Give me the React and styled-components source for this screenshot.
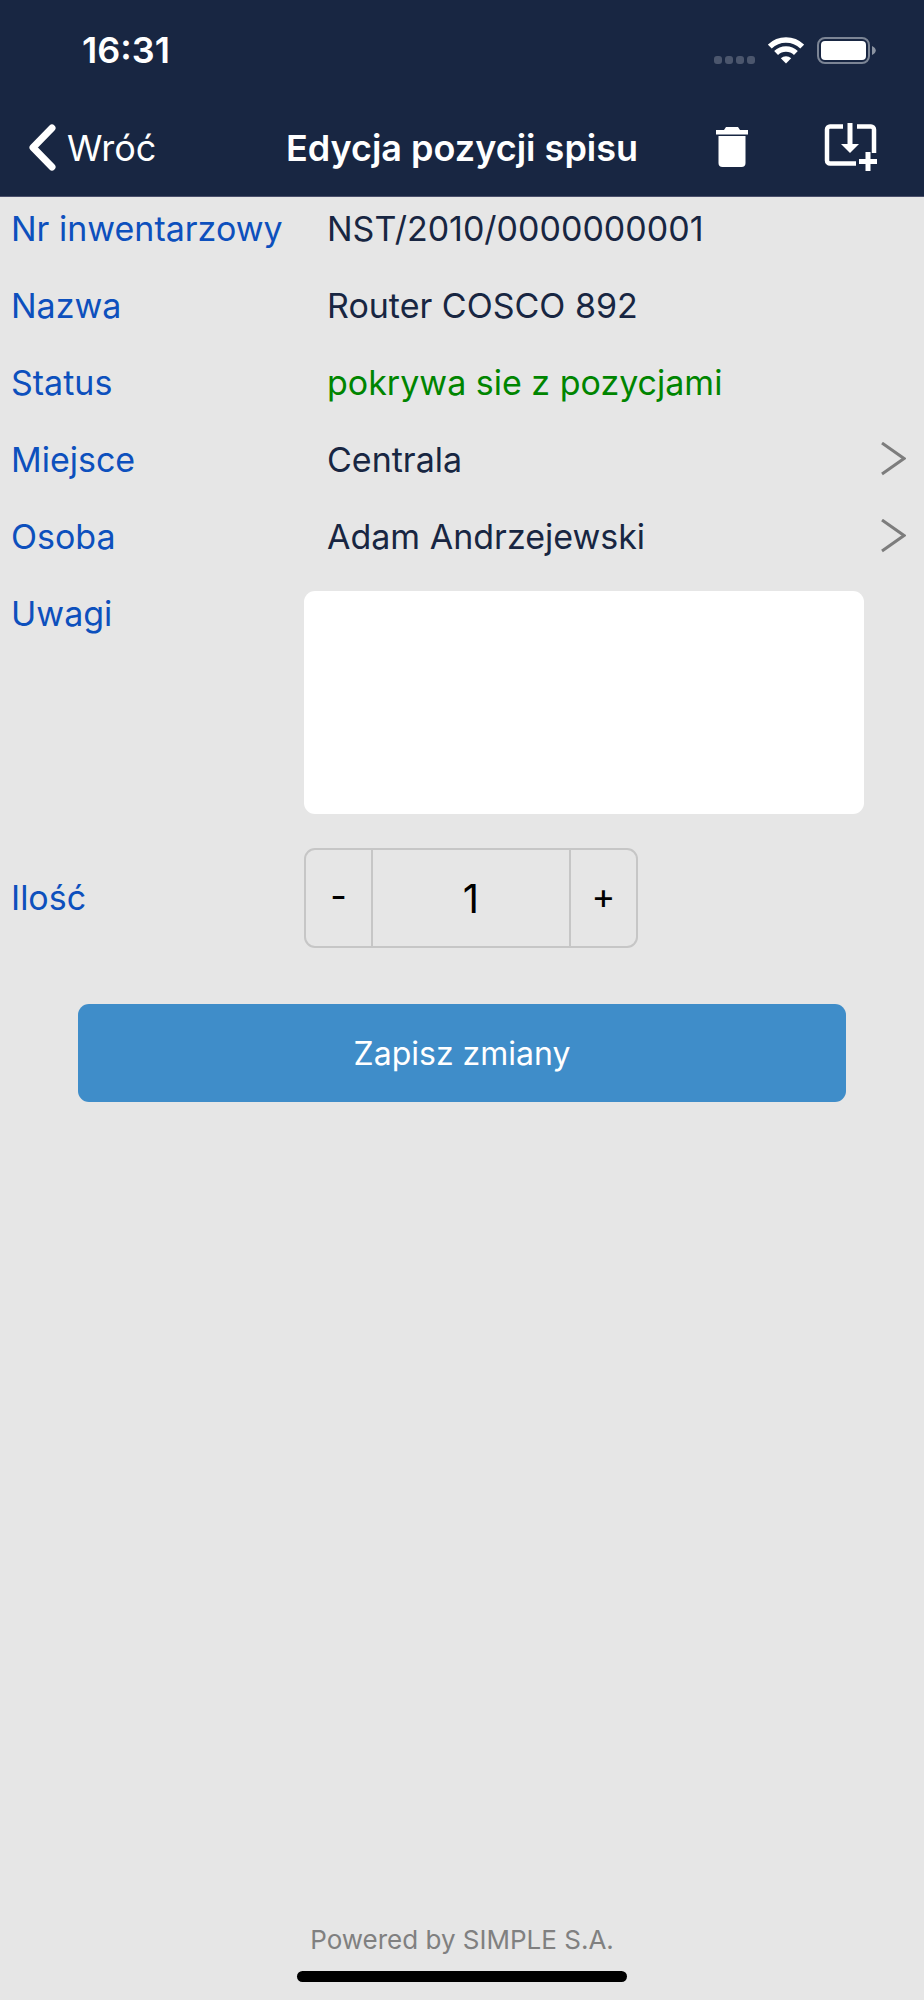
import React, { useState } from "react";
import styled, { createGlobalStyle } from "styled-components";

const GlobalStyle = createGlobalStyle`
  * {
    box-sizing: border-box;
  }

  body {
    margin: 0;
    background: #e6e6e6;
  }

  body, button, input, textarea {
    font-family: Inter, "Liberation Sans", sans-serif;
  }
`;

const Screen = styled.div`
  min-height: 100vh;
  display: flex;
  flex-direction: column;
  background: #e6e6e6;
`;

const Header = styled.header`
  background: #182642;
  color: white;
  border-bottom: 1px solid #4a4f6b;
`;

const StatusBar = styled.div`
  height: 100px;
  padding: 0 48px 0 82px;
  display: flex;
  align-items: center;
  justify-content: space-between;
`;

const Time = styled.span`
  font-size: 36px;
  font-weight: 600;
`;

const StatusIcons = styled.div`
  display: flex;
  align-items: center;
  gap: 13px;
`;

const NavBar = styled.nav`
  height: 96px;
  padding: 0 28px;
  display: grid;
  grid-template-columns: 1fr auto 1fr;
  align-items: center;
`;

const BackLink = styled.a`
  display: flex;
  align-items: center;
  gap: 11px;
  font-size: 36px;
  color: white;
  text-decoration: none;
`;

const Title = styled.h1`
  margin: 0;
  font-size: 36px;
  line-height: 44px;
  font-weight: 600;
`;

const Actions = styled.div`
  display: flex;
  justify-content: flex-end;
  align-items: center;
  gap: 76px;
  padding-right: 18px;
`;

const IconButton = styled.button`
  display: flex;
  padding: 0;
  border: none;
  background: none;
  color: inherit;
`;

const Form = styled.form`
  flex: 1;
  display: flex;
  flex-direction: column;
  gap: 13px;
`;

const Row = styled.div`
  display: grid;
  grid-template-columns: 293px 1fr;
  align-items: ${(props) => props.$align || "start"};
  padding: 0 18px 0 11px;
`;

const Label = styled.label`
  font-size: 34px;
  line-height: 64px;
  color: #0d50bd;
`;

const Value = styled.output`
  padding-left: 23px;
  font-size: 34px;
  line-height: 64px;
  color: ${(props) => props.$color || "#182642"};
`;

const PickerButton = styled.button`
  display: flex;
  align-items: center;
  justify-content: space-between;
  padding: 0 0 0 23px;
  border: none;
  background: none;
  font-size: 34px;
  line-height: 64px;
  color: #182642;
  text-align: left;
`;

const Notes = styled.textarea`
  display: block;
  height: 223px;
  margin: 9px 42px 21px 0;
  padding: 16px 22px;
  border: none;
  border-radius: 11px;
  background: white;
  font-size: 34px;
  resize: none;
`;

const Stepper = styled.div`
  display: grid;
  grid-template-columns: 65px 1fr 65px;
  width: 334px;
  height: 100px;
  border: 2px solid #c6c6c6;
  border-radius: 11px;
`;

const StepButton = styled.button`
  padding: 0 0 4px;
  border: none;
  background: none;
  font-size: 36px;
  color: black;
`;

const Amount = styled.input`
  min-width: 0;
  padding: 0;
  border: solid #c6c6c6;
  border-width: 0 2px;
  background: none;
  font-size: 40px;
  text-align: center;
  color: black;
`;

const SaveButton = styled.button`
  height: 98px;
  margin: 43px 78px 0;
  border: none;
  border-radius: 11px;
  background: #3f8dc9;
  color: white;
  font-size: 32px;
`;

const Footer = styled.footer`
  display: flex;
  flex-direction: column;
  align-items: center;
  gap: 11px;
  padding-bottom: 18px;
  font-size: 26px;
  line-height: 40px;
  color: #808080;
`;

const HomeIndicator = styled.div`
  width: 330px;
  height: 11px;
  border-radius: 6px;
  background: black;
`;

const SignalIcon = () => (
  <svg width="41" height="27" viewBox="0 0 41 27" fill="#4b566d">
    <rect x="0" y="19" width="8" height="8" rx="3" />
    <rect x="11" y="19" width="8" height="8" rx="3" />
    <rect x="22" y="19" width="8" height="8" rx="3" />
    <rect x="33" y="19" width="8" height="8" rx="3" />
  </svg>
);

const WifiIcon = () => (
  <svg width="36" height="27" viewBox="0 0 36 27" fill="none" stroke="white">
    <path d="M1.8 9.6a23.2 23.2 0 0 1 32.4 0" strokeWidth="5.500" />
    <path d="M8.1 16a14.2 14.2 0 0 1 19.8 0" strokeWidth="5.500" />
    <path d="M12.8 21.3a7.6 7.6 0 0 1 10.4 0L18 26.6z" fill="white" stroke="none" />
  </svg>
);

const BatteryIcon = () => (
  <svg width="59" height="27" viewBox="0 0 59 27">
    <rect x="1" y="1" width="51" height="25" rx="7" fill="none" stroke="#7c8595" strokeWidth="2" />
    <rect x="4" y="4" width="45" height="19" rx="4" fill="white" />
    <path d="M55 9c5 2 5 7 0 9z" fill="#8b93a1" />
  </svg>
);

const BackIcon = () => (
  <svg width="28" height="48" viewBox="0 0 28 48" fill="none" stroke="white" strokeWidth="7" strokeLinecap="round" strokeLinejoin="round">
    <path d="M24 4L5 23.500 24 43" />
  </svg>
);

const TrashIcon = () => (
  <svg width="32" height="42" viewBox="0 0 32 42" fill="white">
    <path d="M0 3h8l2-3h12l2 3h8v4.500H0z" />
    <path d="M2.500 9h27v27a4 4 0 0 1-4 4h-19a4 4 0 0 1-4-4z" />
  </svg>
);

const AddItemIcon = () => (
  <svg width="54" height="50" viewBox="0 0 54 50" fill="none" stroke="white">
    <path d="M19 3.500H6a3 3 0 0 0-3 3v31a3 3 0 0 0 3 3h26" strokeWidth="4.500" />
    <path d="M33 3.500h14a3 3 0 0 1 3 3V30" strokeWidth="4.500" />
    <path d="M26 0v22" strokeWidth="5" />
    <path d="M17 21h18l-9 9z" fill="white" stroke="none" />
    <path d="M44 29v19M35 38.500h18" strokeWidth="5" />
  </svg>
);

const ArrowIcon = () => (
  <svg width="25" height="36" viewBox="0 0 25 36" fill="none" stroke="#7d7d7d" strokeWidth="3">
    <path d="M1 1l22 15.500L1 32" />
  </svg>
);

const App = () => {
  const [notes, setNotes] = useState("");
  const [amount, setAmount] = useState(1);

  return (
    <Screen>
      <GlobalStyle />
      <Header>
        <StatusBar>
          <Time>16:31</Time>
          <StatusIcons>
            <SignalIcon />
            <WifiIcon />
            <BatteryIcon />
          </StatusIcons>
        </StatusBar>
        <NavBar>
          <BackLink href="#">
            <BackIcon />
            Wróć
          </BackLink>
          <Title>Edycja pozycji spisu</Title>
          <Actions>
            <IconButton type="button" aria-label="Usuń">
              <TrashIcon />
            </IconButton>
            <IconButton type="button" aria-label="Dodaj">
              <AddItemIcon />
            </IconButton>
          </Actions>
        </NavBar>
      </Header>

      <Form onSubmit={(e) => e.preventDefault()}>
        <Row>
          <Label htmlFor="number">Nr inwentarzowy</Label>
          <Value id="number">NST/2010/0000000001</Value>
        </Row>
        <Row>
          <Label htmlFor="name">Nazwa</Label>
          <Value id="name">Router COSCO 892</Value>
        </Row>
        <Row>
          <Label htmlFor="status">Status</Label>
          <Value id="status" $color="#008500">
            pokrywa sie z pozycjami
          </Value>
        </Row>
        <Row>
          <Label htmlFor="place">Miejsce</Label>
          <PickerButton type="button" id="place">
            Centrala
            <ArrowIcon />
          </PickerButton>
        </Row>
        <Row>
          <Label htmlFor="person">Osoba</Label>
          <PickerButton type="button" id="person">
            Adam Andrzejewski
            <ArrowIcon />
          </PickerButton>
        </Row>
        <Row>
          <Label htmlFor="notes">Uwagi</Label>
          <Notes
            id="notes"
            value={notes}
            onChange={(e) => setNotes(e.target.value)}
          />
        </Row>
        <Row $align="center">
          <Label htmlFor="amount">Ilość</Label>
          <Stepper>
            <StepButton type="button" onClick={() => setAmount(Number(amount) - 1)}>
              -
            </StepButton>
            <Amount
              id="amount"
              inputMode="numeric"
              value={amount}
              onChange={(e) => setAmount(e.target.value)}
            />
            <StepButton type="button" onClick={() => setAmount(Number(amount) + 1)}>
              +
            </StepButton>
          </Stepper>
        </Row>
        <SaveButton type="submit">Zapisz zmiany</SaveButton>
      </Form>

      <Footer>
        Powered by SIMPLE S.A.
        <HomeIndicator />
      </Footer>
    </Screen>
  );
};

export default App;
